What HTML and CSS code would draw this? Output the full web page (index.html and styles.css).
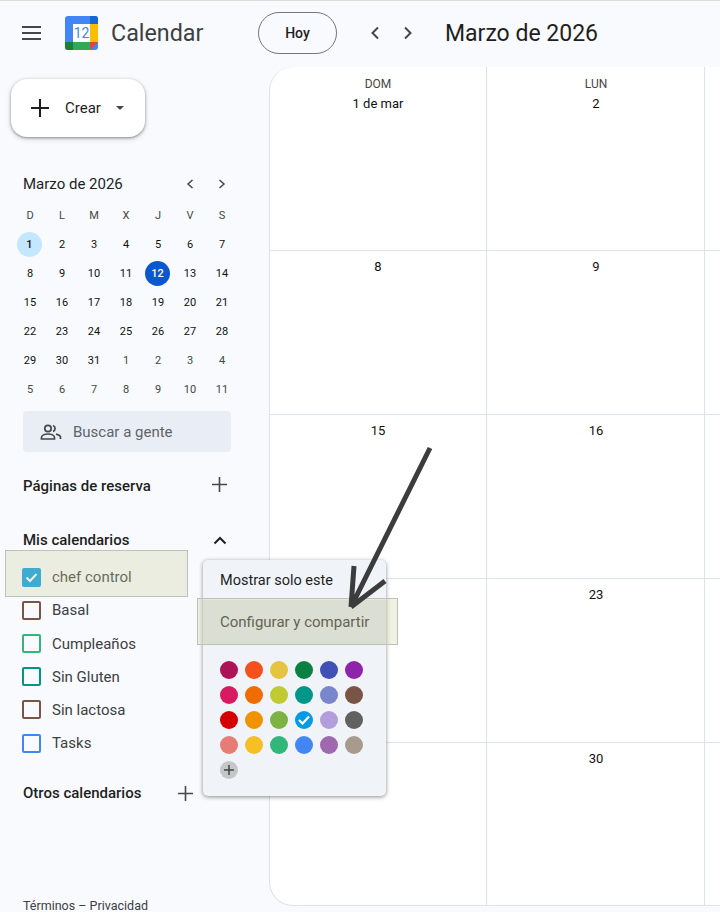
FILE: index.html

```html
<!DOCTYPE html>
<html lang="es">
<head>
  <meta charset="UTF-8" />
  <meta name="viewport" content="width=device-width, initial-scale=1.0" />
  <title>Calendar - Marzo de 2026</title>
  <link rel="stylesheet" href="styles.css">
</head>
<body>
  <header class="topbar">
    <button class="menu-btn" aria-label="Menu">
      <svg width="19" height="14" viewBox="0 0 19 14"><path d="M0 1h19M0 7h19M0 13h19" stroke="#444746" stroke-width="2"/></svg>
    </button>
    <svg class="logo" width="33" height="34" viewBox="0 0 33 34">
      <rect width="33" height="34" rx="3" fill="#4285f4"/>
      <path d="M25 0h5a3 3 0 0 1 3 3v5h-8z" fill="#1967d2"/>
      <rect x="25" y="8" width="8" height="18" fill="#fbbc04"/>
      <rect x="8" y="26" width="17" height="8" fill="#34a853"/>
      <path d="M0 26h8v8H3a3 3 0 0 1-3-3z" fill="#188038"/>
      <path d="M25 34v-8h8z" fill="#ea4335"/>
      <rect x="8" y="8" width="17" height="18" fill="#fff"/>
      <text x="16.5" y="22" text-anchor="middle" class="logo-num">12</text>
    </svg>
    <span class="brand">Calendar</span>
    <button class="today">Hoy</button>
    <div class="nav-arrows">
      <svg width="10" height="14" viewBox="0 0 10 14"><path d="M8 1.500 2.500 7 8 12.500" fill="none" stroke="#444746" stroke-width="2"/></svg>
      <svg width="10" height="14" viewBox="0 0 10 14"><path d="M2 1.500 7.500 7 2 12.500" fill="none" stroke="#444746" stroke-width="2"/></svg>
    </div>
    <h1 class="month-title">Marzo de 2026</h1>
  </header>

  <div class="layout">
    <aside class="sidebar">
      <button class="create">
        <svg width="18" height="18" viewBox="0 0 18 18"><path d="M9 0v18M0 9h18" stroke="#1f1f1f" stroke-width="2"/></svg>
        <span class="create-label">Crear</span>
        <span class="caret"></span>
      </button>

      <div class="mini-head">
        <span>Marzo de 2026</span>
        <div class="mini-arrows">
          <svg width="8" height="10" viewBox="0 0 8 10"><path d="M6.500 1 2 5l4.500 4" fill="none" stroke="#444746" stroke-width="1.500"/></svg>
          <svg width="8" height="10" viewBox="0 0 8 10"><path d="M1.500 1 6 5 1.500 9" fill="none" stroke="#444746" stroke-width="1.500"/></svg>
        </div>
      </div>

      <div class="mini-cal">
        <span class="wd">D</span><span class="wd">L</span><span class="wd">M</span><span class="wd">X</span><span class="wd">J</span><span class="wd">V</span><span class="wd">S</span>
        <span><b class="first">1</b></span><span>2</span><span>3</span><span>4</span><span>5</span><span>6</span><span>7</span>
        <span>8</span><span>9</span><span>10</span><span>11</span><span><b class="now">12</b></span><span>13</span><span>14</span>
        <span>15</span><span>16</span><span>17</span><span>18</span><span>19</span><span>20</span><span>21</span>
        <span>22</span><span>23</span><span>24</span><span>25</span><span>26</span><span>27</span><span>28</span>
        <span>29</span><span>30</span><span>31</span><span class="off">1</span><span class="off">2</span><span class="off">3</span><span class="off">4</span>
        <span class="off">5</span><span class="off">6</span><span class="off">7</span><span class="off">8</span><span class="off">9</span><span class="off">10</span><span class="off">11</span>
      </div>

      <div class="people">
        <svg width="22" height="16" viewBox="0 0 22 16"><g fill="none" stroke="#444746" stroke-width="1.700"><circle cx="8" cy="4.500" r="3.200"/><path d="M1.500 15v-1.500c0-2 3-3.500 6.500-3.500s6.500 1.500 6.500 3.500V15z"/><path d="M13 1.500a3.200 3.200 0 0 1 0 6M16 10.200c2.500.5 4.500 1.700 4.500 3.300V15"/></g></svg>
        <span>Buscar a gente</span>
      </div>

      <div class="section booking">
        <span>Páginas de reserva</span>
        <svg class="plus" width="15" height="15" viewBox="0 0 15 15"><path d="M7.500 0v15M0 7.500h15" stroke="#444746" stroke-width="1.600"/></svg>
      </div>

      <div class="section mine">
        <span>Mis calendarios</span>
        <svg class="chev" width="14" height="9" viewBox="0 0 14 9"><path d="M1.500 7.500 7 2l5.500 5.500" fill="none" stroke="#1f1f1f" stroke-width="2"/></svg>
      </div>

      <ul class="cal-list">
        <li><span class="check checked"><svg width="13" height="11" viewBox="0 0 13 11"><path d="M1.500 5.500 5 9l6.500-7" fill="none" stroke="#fff" stroke-width="2"/></svg></span>chef control</li>
        <li><span class="check c-brown"></span>Basal</li>
        <li><span class="check c-green"></span>Cumpleaños</li>
        <li><span class="check c-teal"></span>Sin Gluten</li>
        <li><span class="check c-brown"></span>Sin lactosa</li>
        <li><span class="check c-blue"></span>Tasks</li>
      </ul>

      <div class="section others">
        <span>Otros calendarios</span>
        <svg class="plus" width="15" height="15" viewBox="0 0 15 15"><path d="M7.500 0v15M0 7.500h15" stroke="#444746" stroke-width="1.600"/></svg>
      </div>

      <div class="legal">Términos – Privacidad</div>
    </aside>

    <main class="month">
      <div class="cell head"><span class="dow">DOM</span><span class="date">1 de mar</span></div>
      <div class="cell head"><span class="dow">LUN</span><span class="date">2</span></div>
      <div class="cell head"></div>
      <div class="cell"><span class="date">8</span></div>
      <div class="cell"><span class="date">9</span></div>
      <div class="cell"></div>
      <div class="cell"><span class="date">15</span></div>
      <div class="cell"><span class="date">16</span></div>
      <div class="cell"></div>
      <div class="cell"><span class="date">22</span></div>
      <div class="cell"><span class="date">23</span></div>
      <div class="cell"></div>
      <div class="cell"><span class="date">29</span></div>
      <div class="cell"><span class="date">30</span></div>
      <div class="cell"></div>
    </main>
  </div>

  <div class="popup">
    <div class="popup-item">Mostrar solo este</div>
    <div class="popup-item active">Configurar y compartir</div>
    <div class="swatches">
      <i style="background:#ad1457"></i><i style="background:#f4511e"></i><i style="background:#e4c441"></i><i style="background:#0b8043"></i><i style="background:#3f51b5"></i><i style="background:#8e24aa"></i>
      <i style="background:#d81b60"></i><i style="background:#ef6c00"></i><i style="background:#c0ca33"></i><i style="background:#009688"></i><i style="background:#7986cb"></i><i style="background:#795548"></i>
      <i style="background:#d50000"></i><i style="background:#f09300"></i><i style="background:#7cb342"></i><i style="background:#039be5"><svg width="12" height="10" viewBox="0 0 12 10"><path d="M1 5l3.500 3.500L11 1.500" fill="none" stroke="#fff" stroke-width="2.200"/></svg></i><i style="background:#b39ddb"></i><i style="background:#616161"></i>
      <i style="background:#e67c73"></i><i style="background:#f6bf26"></i><i style="background:#33b679"></i><i style="background:#4285f4"></i><i style="background:#9e69af"></i><i style="background:#a79b8e"></i>
      <i style="background:#c4c7c5"><svg width="10" height="10" viewBox="0 0 10 10"><path d="M5 0v10M0 5h10" stroke="#444746" stroke-width="1.500"/></svg></i>
    </div>
  </div>

  <div class="mark mark-row"></div>
  <div class="mark mark-menu"></div>

  <svg class="arrow" width="720" height="912" viewBox="0 0 720 912">
    <path d="M430 448 351 607M354 566l-3 41M385 581l-34 26" fill="none" stroke="#3c3c3c" stroke-width="5"/>
  </svg>
</body>
</html>
```

FILE: styles.css

```css
* {
  box-sizing: border-box;
}
html, body {
  height: 100%;
}
body {
  margin: 0;
  background: #f8fafd;
  color: #1f1f1f;
  font-family: Roboto, "Open Sans", sans-serif;
  overflow: hidden;
  position: relative;
  border-top: 1px solid #dcdcdc;
}
button {
  font-family: inherit;
  background: none;
  border: none;
  padding: 0;
}

/* top bar */
.topbar {
  display: flex;
  align-items: center;
  height: 66px;
  padding-bottom: 2px;
}
.menu-btn {
  display: flex;
  margin-left: 22px;
  width: 43px;
}
.logo-num {
  font-family: Roboto, sans-serif;
  font-size: 14px;
  font-weight: 400;
  fill: #4285f4;
}
.brand {
  margin-left: 13px;
  width: 147px;
  font-size: 23.300px;
  color: #3c4043;
}
.today {
  width: 79px;
  height: 42px;
  border: 1px solid #747775;
  border-radius: 21px;
  font-size: 14px;
  font-weight: 500;
  color: #1f1f1f;
}
.nav-arrows {
  display: flex;
  gap: 23px;
  margin-left: 33px;
}
.month-title {
  margin: 0 0 0 32px;
  font-size: 23px;
  font-weight: 400;
  color: #1f1f1f;
}

.layout {
  display: flex;
  height: 838px;
}

/* sidebar */
.sidebar {
  width: 270px;
  flex: none;
  font-size: 15px;
}
.create {
  display: flex;
  align-items: center;
  width: 134px;
  height: 58px;
  margin: 12px 0 0 11px;
  padding-left: 20px;
  background: #fff;
  border-radius: 16px;
  box-shadow: 0 1px 3px rgba(0, 0, 0, .4), 0 2px 6px rgba(0, 0, 0, .12);
}
.create-label {
  margin-left: 16px;
  font-size: 15px;
  font-weight: 400;
  color: #1f1f1f;
}
.caret {
  margin-left: 15px;
  border: 4px solid transparent;
  border-top-color: #444746;
  border-bottom: 0;
}
.mini-head {
  display: flex;
  align-items: center;
  justify-content: space-between;
  height: 20px;
  margin: 37px 44px 0 23px;
  font-weight: 400;
  font-size: 15px;
}
.mini-arrows {
  display: flex;
  gap: 24px;
}
.mini-cal {
  display: grid;
  grid-template-columns: repeat(7, 32px);
  grid-auto-rows: 29px;
  margin: 7px 0 0 14px;
  font-size: 11px;
  font-weight: 400;
  color: #111;
}
.mini-cal span {
  display: flex;
  align-items: center;
  justify-content: center;
}
.mini-cal b {
  display: flex;
  align-items: center;
  justify-content: center;
  width: 25px;
  height: 25px;
  margin-left: -1px;
  border-radius: 50%;
  font-weight: 500;
}
.mini-cal .wd, .mini-cal .off {
  color: #444746;
}
.first {
  background: #c2e7ff;
}
.now {
  background: #0b57d0;
  color: #fff;
}
.people {
  display: flex;
  align-items: center;
  gap: 11px;
  width: 208px;
  height: 41px;
  margin: 7px 0 0 23px;
  padding-left: 17px;
  background: #e9eef6;
  border-radius: 4px;
  color: #5f6368;
}
.section {
  display: flex;
  align-items: center;
  height: 20px;
  margin-left: 23px;
  font-weight: 500;
  font-size: 15px;
}
.section span {
  flex: 1;
}
.plus {
  margin-top: -4px;
}
.booking {
  margin-top: 24px;
  padding-right: 43px;
}
.mine {
  margin-top: 34px;
  padding-right: 43px;
}
.others {
  margin-top: 23px;
  width: 170px;
}
.others .plus {
  margin-top: 0;
}
.cal-list {
  list-style: none;
  margin: 10.600px 0 0;
  padding: 0 0 0 22px;
  color: #3c4043;
}
.cal-list li {
  display: flex;
  align-items: center;
  gap: 11px;
  height: 33.200px;
}
.check {
  display: flex;
  align-items: center;
  justify-content: center;
  width: 19px;
  height: 19px;
  border: 2px solid;
  border-radius: 2px;
}
.checked {
  background: #039be5;
  border-color: #039be5;
}
.c-brown { border-color: #795548; }
.c-green { border-color: #33b679; }
.c-teal { border-color: #009688; }
.c-blue { border-color: #4285f4; }
.others {
  margin-top: 23.400px;
}
.legal {
  margin: 97px 0 0 23px;
  font-size: 12.500px;
  line-height: 12px;
  color: #3c4043;
}

/* month grid */
.month {
  display: grid;
  grid-template-columns: 217px 218px 1fr;
  grid-template-rows: 184px 164px 164px 164px 162px;
  flex: 1;
  height: 839px;
  margin-left: -1px;
  background: #fff;
  border: 1px solid #dde3ea;
  border-width: 0 0 1px 1px;
  border-radius: 24px 0 0 24px;
  overflow: hidden;
}
.cell {
  display: flex;
  flex-direction: column;
  align-items: center;
  padding-top: 8px;
  border-right: 1px solid #dde3ea;
  border-bottom: 1px solid #dde3ea;
}
.cell:nth-child(3n+2) {
  padding-left: 1px;
}
.cell:nth-child(3n) {
  border-right: 0;
}
.cell:nth-last-child(-n+3) {
  border-bottom: 0;
}
.head {
  padding-top: 10px;
}
.dow {
  height: 19px;
  font-size: 12px;
  font-weight: 400;
  color: #444746;
}
.date {
  font-size: 13px;
  font-weight: 400;
  line-height: 16px;
  color: #111;
}

/* colour menu */
.popup {
  position: absolute;
  left: 203px;
  top: 559px;
  width: 183px;
  height: 236px;
  background: #f0f4f9;
  border-radius: 5px;
  box-shadow: 0 1px 4px rgba(0, 0, 0, .45);
  padding-top: 1px;
}
.popup-item {
  display: flex;
  align-items: center;
  height: 39px;
  padding-left: 17px;
  font-size: 14.500px;
  color: #1f1f1f;
}
.popup-item.active {
  height: 45px;
  padding-bottom: 2px;
  font-size: 15px;
  background: #e1e4e8;
  color: #333;
}
.swatches {
  display: grid;
  grid-template-columns: repeat(6, 18px);
  grid-auto-rows: 18px;
  gap: 7px;
  margin: 16px 0 0 17px;
}
.swatches i {
  display: flex;
  align-items: center;
  justify-content: center;
  border-radius: 50%;
}

/* annotations drawn on the screenshot */
.mark {
  position: absolute;
  background: rgba(205, 210, 160, .3);
  border: 1px solid #bfc0b8;
}
.mark-row {
  left: 5px;
  top: 549px;
  width: 183px;
  height: 47px;
}
.mark-menu {
  left: 197px;
  top: 597px;
  width: 201px;
  height: 47px;
}
.arrow {
  position: absolute;
  left: 0;
  top: -1px;
  pointer-events: none;
}
```
